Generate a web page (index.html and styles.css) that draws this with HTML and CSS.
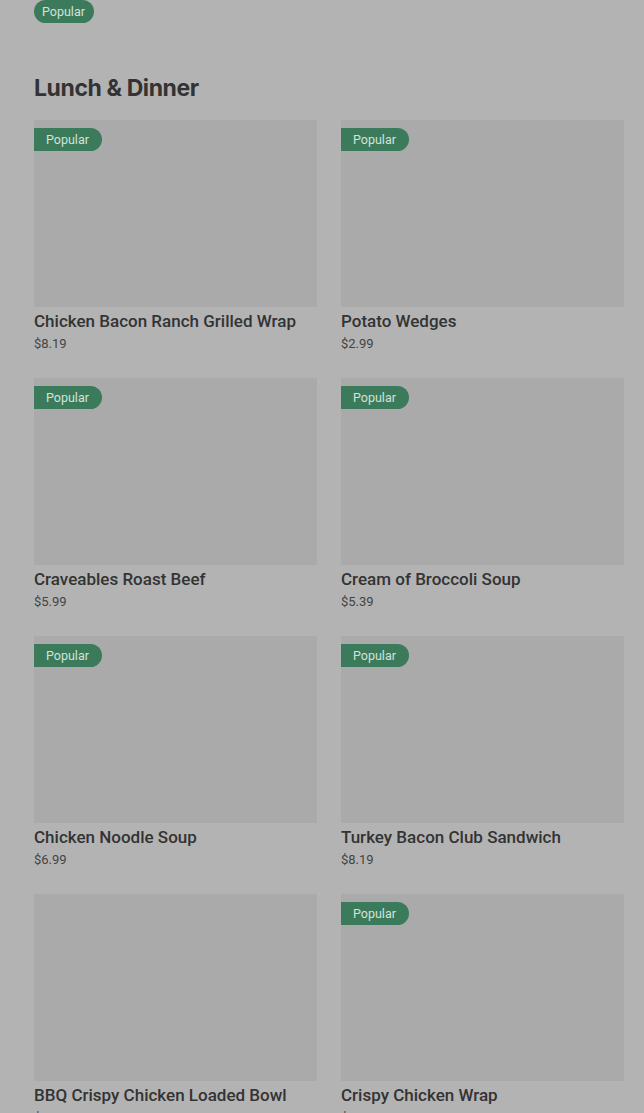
FILE: index.html
```html
<!DOCTYPE html>
<html lang="en">
<head>
    <meta charset="UTF-8">
    <meta name="viewport" content="width=device-width, initial-scale=1.0">
    <title>Menu</title>
    <link rel="stylesheet" href="styles.css">
</head>
<body>
    <div class="menu">
        <span class="pill">Popular</span>

        <h2 class="section-title">Lunch &amp; Dinner</h2>

        <div class="grid">
            <div class="item">
                <div class="thumb"><span class="badge">Popular</span></div>
                <div class="name">Chicken Bacon Ranch Grilled Wrap</div>
                <div class="price">$8.19</div>
            </div>
            <div class="item">
                <div class="thumb"><span class="badge">Popular</span></div>
                <div class="name">Potato Wedges</div>
                <div class="price">$2.99</div>
            </div>
            <div class="item">
                <div class="thumb"><span class="badge">Popular</span></div>
                <div class="name">Craveables Roast Beef</div>
                <div class="price">$5.99</div>
            </div>
            <div class="item">
                <div class="thumb"><span class="badge">Popular</span></div>
                <div class="name">Cream of Broccoli Soup</div>
                <div class="price">$5.39</div>
            </div>
            <div class="item">
                <div class="thumb"><span class="badge">Popular</span></div>
                <div class="name">Chicken Noodle Soup</div>
                <div class="price">$6.99</div>
            </div>
            <div class="item">
                <div class="thumb"><span class="badge">Popular</span></div>
                <div class="name">Turkey Bacon Club Sandwich</div>
                <div class="price">$8.19</div>
            </div>
            <div class="item">
                <div class="thumb"></div>
                <div class="name">BBQ Crispy Chicken Loaded Bowl</div>
                <div class="price">$10.49</div>
            </div>
            <div class="item">
                <div class="thumb"><span class="badge">Popular</span></div>
                <div class="name">Crispy Chicken Wrap</div>
                <div class="price">$7.49</div>
            </div>
        </div>
    </div>
</body>
</html>
```

FILE: styles.css
```css
:root {
    --page: #b3b3b3;
    --thumb: #aaaaaa;
    --text: #333333;
    --text-2: #444444;
    --green: #3b7b5b;
    --badge-text: #d3e2da;
}

body {
    margin: 0;
    background-color: var(--page);
    font-family: Roboto, 'Liberation Sans', sans-serif;
    color: var(--text);
}
.menu {
    padding: 0 20px 0 34px;
}
.pill {
    display: inline-block;
    height: 23px;
    line-height: 23px;
    padding: 0 9px 0 8px;
    font-size: 12.5px;
    border-radius: 12px;
    background-color: var(--green);
    color: var(--badge-text);
}
.section-title {
    margin: 50px 0 17px;
    font-family: Inter, sans-serif;
    font-size: 23px;
    line-height: 30px;
    font-weight: 700;
    letter-spacing: -0.4px;
    color: var(--text);
}
.grid {
    display: grid;
    grid-template-columns: 1fr 1fr;
    column-gap: 24px;
    row-gap: 25px;
}
.thumb {
    position: relative;
    height: 187px;
    background-color: var(--thumb);
}
.badge {
    position: absolute;
    top: 8px;
    left: 0;
    height: 23px;
    line-height: 23px;
    padding: 0 13px 0 12px;
    font-size: 12.5px;
    border-radius: 0 12px 12px 0;
    background-color: var(--green);
    color: var(--badge-text);
}
.name {
    margin-top: 3px;
    font-size: 17px;
    line-height: 22px;
    font-weight: 500;
}
.price {
    margin-top: 3px;
    font-size: 13px;
    line-height: 18px;
    color: var(--text-2);
}
```
